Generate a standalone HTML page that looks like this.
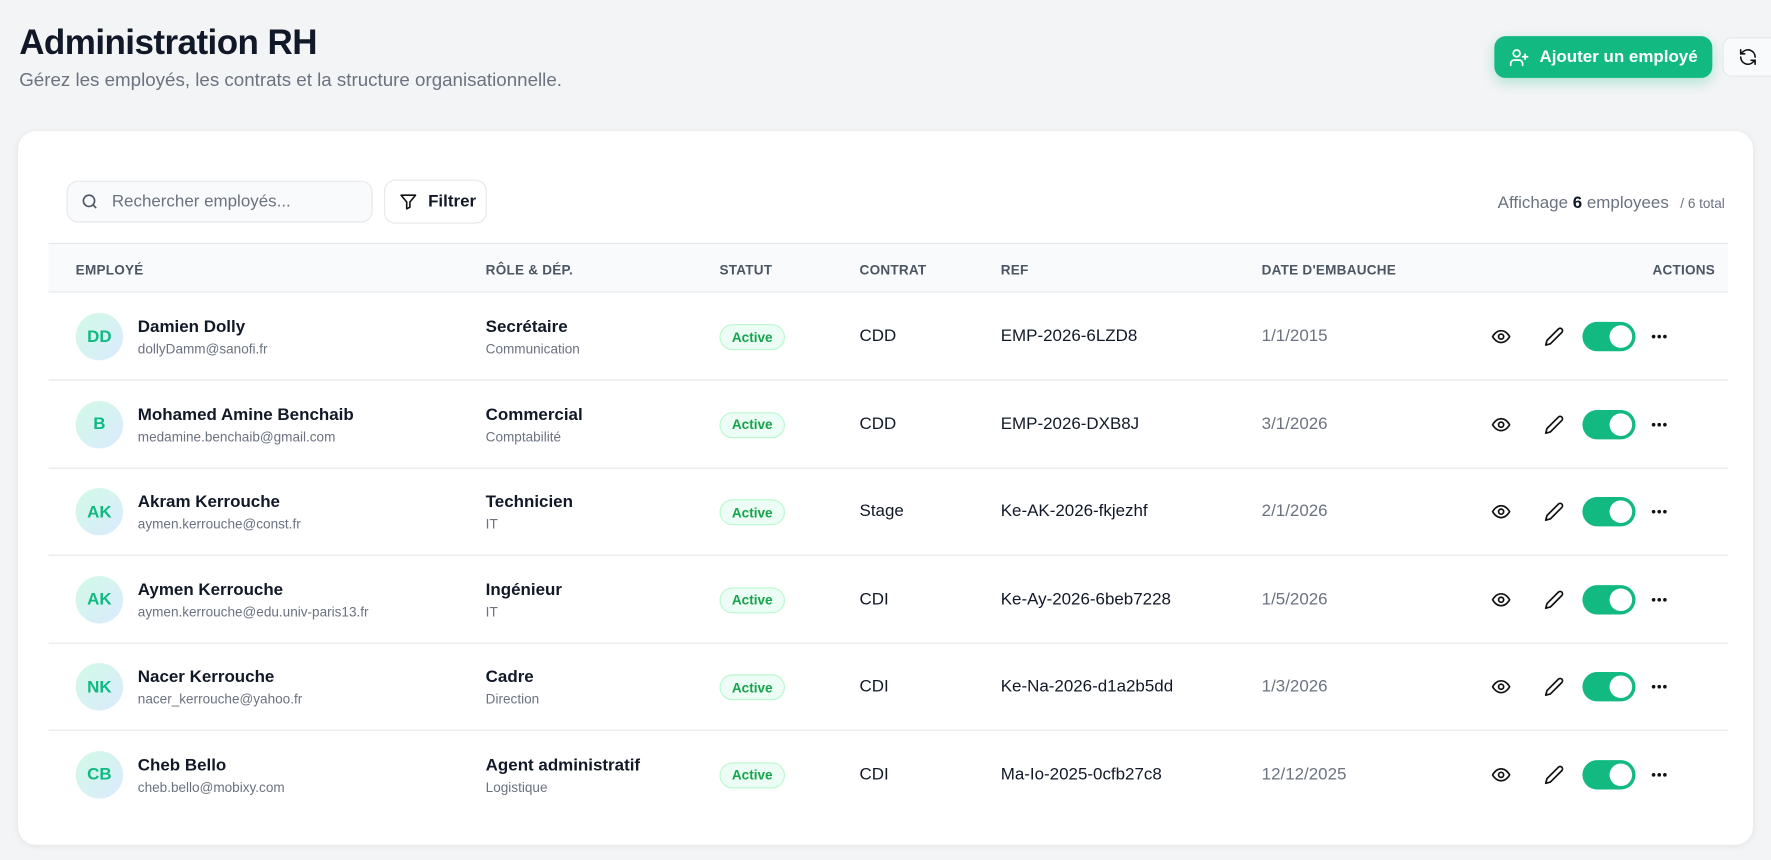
<!DOCTYPE html>
<html><head><meta charset="utf-8"><style>
*{box-sizing:border-box;margin:0;padding:0}
html,body{width:1771px;height:859px;overflow:hidden;background:#f3f4f6;font-family:"Liberation Sans",Arial,sans-serif;color:#111827}
#w{position:absolute;left:0;top:0;width:1568px;height:761px;transform:scale(1.1295);transform-origin:0 0}
.abs{position:absolute}
h1{position:absolute;left:17px;top:20px;font-size:31px;font-weight:700;letter-spacing:-0.5px;color:#111827}
.sub{left:17px;top:61px;font-size:16.6px;color:#6b7280}
.btn{left:1323px;top:32px;width:193px;height:37px;border-radius:10px;background:#12b981;color:#fff;font-size:15px;font-weight:700;display:flex;align-items:center;justify-content:center;gap:9px;box-shadow:0 4px 12px rgba(16,185,129,.3)}
.ref{left:1525px;top:33px;width:50px;height:35px;border-radius:8px;background:#f9fafb;border:1px solid #e5e7eb;display:flex;align-items:center;padding-left:13px}
.card{left:16px;top:116px;width:1536px;height:632px;background:#fff;border-radius:16px;box-shadow:0 1px 6px rgba(0,0,0,.08)}
.search{left:59px;top:160px;width:271px;height:37px;border:1px solid #e5e7eb;background:#f9fafb;border-radius:10px;display:flex;align-items:center;padding-left:11px;gap:11px;font-size:15px;color:#6b7280}
.filt{left:340px;top:159px;width:91px;height:39px;border:1px solid #e5e7eb;border-radius:10px;background:#fff;display:flex;align-items:center;padding-left:12px;gap:9px;font-size:15px;font-weight:700}
.aff{right:41px;top:171px;font-size:15px;color:#6b7280}
.aff b{color:#111827}.aff small{font-size:12px;margin-left:6px}
.thead{left:43px;top:215px;width:1487px;height:44px;background:#f9fafb;border-top:1px solid #e5e7eb;border-bottom:1px solid #e5e7eb}
.th{top:232px;font-size:12px;font-weight:700;color:#4b5563;letter-spacing:.2px}
.row{left:43px;width:1487px;height:78px;border-bottom:1px solid #e5e7eb}
.av{width:42px;height:42px;border-radius:50%;background:linear-gradient(135deg,#d1fae5,#dbeafe);color:#10b981;font-weight:700;font-size:15px;display:flex;align-items:center;justify-content:center}
.nm{font-size:15px;font-weight:700;color:#111827}
.em{font-size:12px;color:#6b7280}
.badge{width:58px;height:23px;border-radius:12px;border:1px solid #bbf7d0;background:#ecfdf5;color:#16a34a;font-size:12px;font-weight:700;display:flex;align-items:center;justify-content:center}
.tx{font-size:15px;color:#111827}
.dt{font-size:15px;color:#6b7280}
.tg{width:47px;height:26px;border-radius:13px;background:#12b981}
.tg:after{content:"";position:absolute;right:3px;top:3px;width:20px;height:20px;border-radius:50%;background:#fff}
</style></head><body><div id="w">
<h1>Administration RH</h1>
<div class="abs sub">Gérez les employés, les contrats et la structure organisationnelle.</div>
<div class="abs btn"><svg width="18" height="18" viewBox="0 0 24 24" fill="none" stroke="#fff" stroke-width="2" stroke-linecap="round"><circle cx="9" cy="7" r="4"/><path d="M2 21v-2a4 4 0 0 1 4-4h6a4 4 0 0 1 4 4v2M19 8v6M16 11h6"/></svg>Ajouter un employé</div>
<div class="abs ref"><svg width="17" height="17" viewBox="0 0 24 24" fill="none" stroke="#111" stroke-width="2" stroke-linecap="round"><path d="M21 12a9 9 0 0 0-15.5-6.2L3 8M3 3v5h5M3 12a9 9 0 0 0 15.5 6.2L21 16M21 21v-5h-5"/></svg></div>
<div class="abs card"></div>
<div class="abs search"><svg width="17" height="17" viewBox="0 0 24 24" fill="none" stroke="#4b5563" stroke-width="2"><circle cx="11" cy="11" r="7"/><path d="M20 20l-4-4"/></svg>Rechercher employés...</div>
<div class="abs filt"><svg width="17" height="17" viewBox="0 0 24 24" fill="none" stroke="#111" stroke-width="2" stroke-linejoin="round"><path d="M3 4h18l-7 8.5V19l-4 2v-8.5z"/></svg>Filtrer</div>
<div class="abs aff">Affichage <b>6</b> employees <small>/ 6 total</small></div>
<div class="abs thead"></div>
<div class="abs th" style="left:67px">EMPLOYÉ</div>
<div class="abs th" style="left:430px">RÔLE &amp; DÉP.</div>
<div class="abs th" style="left:637px">STATUT</div>
<div class="abs th" style="left:761px">CONTRAT</div>
<div class="abs th" style="left:886px">REF</div>
<div class="abs th" style="left:1117px">DATE D'EMBAUCHE</div>
<div class="abs th" style="left:1463px">ACTIONS</div>
<div id="rows"></div>
<script>
var d=[["DD","Damien Dolly","dollyDamm@sanofi.fr","Secrétaire","Communication","CDD","EMP-2026-6LZD8","1/1/2015"],
["B","Mohamed Amine Benchaib","medamine.benchaib@gmail.com","Commercial","Comptabilité","CDD","EMP-2026-DXB8J","3/1/2026"],
["AK","Akram Kerrouche","aymen.kerrouche@const.fr","Technicien","IT","Stage","Ke-AK-2026-fkjezhf","2/1/2026"],
["AK","Aymen Kerrouche","aymen.kerrouche@edu.univ-paris13.fr","Ingénieur","IT","CDI","Ke-Ay-2026-6beb7228","1/5/2026"],
["NK","Nacer Kerrouche","nacer_kerrouche@yahoo.fr","Cadre","Direction","CDI","Ke-Na-2026-d1a2b5dd","1/3/2026"],
["CB","Cheb Bello","cheb.bello@mobixy.com","Agent administratif","Logistique","CDI","Ma-Io-2025-0cfb27c8","12/12/2025"]];
var h="";
d.forEach(function(r,i){var c=298+i*77.5;var last=i==5?'border-bottom:none;':'';
h+='<div class="abs row" style="top:'+(c-39)+'px;'+last+'"></div>';
h+='<div class="abs av" style="left:67px;top:'+(c-21)+'px">'+r[0]+'</div>';
h+='<div class="abs nm" style="left:122px;top:'+(c-17)+'px">'+r[1]+'</div>';
h+='<div class="abs em" style="left:122px;top:'+(c+4)+'px">'+r[2]+'</div>';
h+='<div class="abs nm" style="left:430px;top:'+(c-17)+'px">'+r[3]+'</div>';
h+='<div class="abs em" style="left:430px;top:'+(c+4)+'px">'+r[4]+'</div>';
h+='<div class="abs badge" style="left:637px;top:'+(c-11)+'px">Active</div>';
h+='<div class="abs tx" style="left:761px;top:'+(c-9)+'px">'+r[5]+'</div>';
h+='<div class="abs tx" style="left:886px;top:'+(c-9)+'px">'+r[6]+'</div>';
h+='<div class="abs dt" style="left:1117px;top:'+(c-9)+'px">'+r[7]+'</div>';
h+='<svg class="abs" style="left:1320px;top:'+(c-9)+'px" width="18" height="18" viewBox="0 0 24 24" fill="none" stroke="#111" stroke-width="2"><path d="M2 12s3.5-7 10-7 10 7 10 7-3.5 7-10 7S2 12 2 12z"/><circle cx="12" cy="12" r="3"/></svg>';
h+='<svg class="abs" style="left:1367px;top:'+(c-9)+'px" width="18" height="18" viewBox="0 0 24 24" fill="none" stroke="#111" stroke-width="2" stroke-linejoin="round"><path d="M17 3a2.8 2.8 0 0 1 4 4L7.5 20.5 2 22l1.5-5.5z"/></svg>';
h+='<div class="abs tg" style="left:1401px;top:'+(c-13)+'px"></div>';
h+='<svg class="abs" style="left:1462px;top:'+(c-3)+'px" width="14" height="6" viewBox="0 0 14 6"><circle cx="2" cy="3" r="1.6" fill="#111"/><circle cx="7" cy="3" r="1.6" fill="#111"/><circle cx="12" cy="3" r="1.6" fill="#111"/></svg>';
});
document.getElementById("rows").innerHTML=h;
</script>
</div></body></html>
